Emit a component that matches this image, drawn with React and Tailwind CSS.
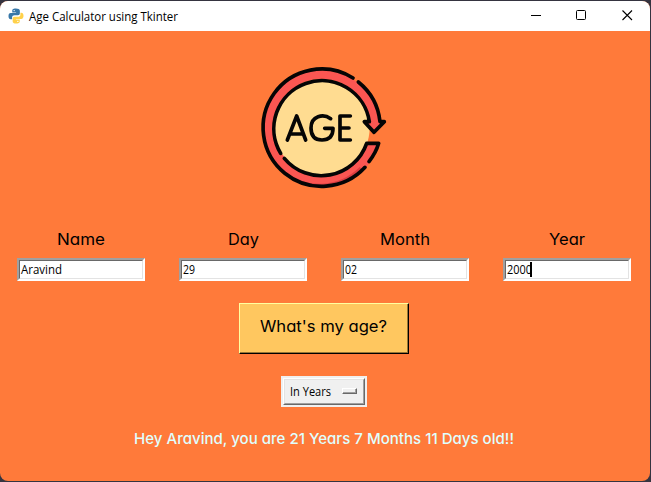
const fields = [
  { label: 'Name', value: 'Aravind' },
  { label: 'Day', value: '29' },
  { label: 'Month', value: '02' },
  { label: 'Year', value: '2000', focused: true },
];

const labelWidths = { Name: 48, Day: 31, Month: 50, Year: 36 };
const valueWidths = { Aravind: 41, 29: 12, '02': 12, 2000: 25 };

function PythonLogo() {
  return (
    <svg className="h-4 w-4" viewBox="0 0 32 32">
      <path fill="#3777a8" d="M15.8 1c-7 0-7.3 2.900-7.300 4.600V9h7.700v1.200H5.400C2.500 10.200 1 12.700 1 16.400s1.700 6.100 4.500 6.100h2.700v-3.900c0-2.800 2.300-4.200 4.600-4.200h7c2.400 0 3.900-1.800 3.900-4V5.600C23.700 2.500 20.300 1 15.800 1z" />
      <path fill="#ffd14a" d="M16.200 31c7 0 7.300-2.900 7.300-4.600V23h-7.700v-1.200h10.800c2.900 0 4.400-2.500 4.400-6.200s-1.700-6.100-4.500-6.100h-1.700v3.900c0 2.800-2.300 4.200-4.600 4.200h-7c-2.400 0-3.900 1.800-3.900 4v4.800c0 3.100 2.400 4.600 6.900 4.600z" />
      <circle cx="12.300" cy="5.200" r="1.400" fill="#fff" />
      <circle cx="19.700" cy="26.800" r="1.400" fill="#fff" />
    </svg>
  );
}

function AgeLogo() {
  return (
    <svg className="h-[145px] w-[150px]" viewBox="0 0 450 435" fill="none" strokeLinecap="round" strokeLinejoin="round">
      <circle cx="215" cy="218" r="144" fill="#ffdc91" />
      <path fill="#fb5652" d="M390 200A176 176 0 1 0 386 265H350A144 144 0 1 1 358 200H343L372 232L403 200Z" />
      <path fill="#db3e42" d="M98 346A177 177 0 0 0 338 344L329 336A170 170 0 0 1 98 346Z" />
      <g stroke="#050505" strokeWidth="11">
        <path d="M309 69A176 176 0 1 0 345 337" />
        <path d="M325 81A177 177 0 0 1 390 200H403L372 232L343 200H358A144 144 0 1 0 92 295" />
        <path d="M103 310A144 144 0 0 0 350 265H386Q378 293 357 320" />
        <path d="M112 255L140 183L167 255M121 237H158" />
        <path d="M242 191C220 175 183 182 183 219C183 249 201 255 216 255C240 255 249 241 249 220H224" />
        <path d="M301 183H270V255H301M270 219H297" />
      </g>
    </svg>
  );
}

function Fit({ children, width, className = '' }) {
  return (
    <svg className={`block h-6 overflow-visible ${className}`} width={width}>
      <text x="0" y="17" textLength={width} lengthAdjust="spacingAndGlyphs" fill="currentColor">
        {children}
      </text>
    </svg>
  );
}

function Field({ label, value, focused }) {
  return (
    <label className="flex w-32 flex-col items-center">
      <Fit width={labelWidths[label]} className="mb-[6px] font-[Inter,sans-serif] text-[16px] text-black [font-feature-settings:'cv11']">{label}</Fit>
      <span className="block h-[23px] w-full border-2 border-t-[#a0a0a0] border-r-white border-b-white border-l-[#a0a0a0]">
        <span className="flex h-full border border-t-[#696969] border-r-[#e3e3e3] border-b-[#e3e3e3] border-l-[#696969] bg-white pl-px">
          <Fit width={valueWidths[value]} className="-mt-[4px] font-['Open_Sans',sans-serif] text-[12px] text-black">{value}</Fit>
          {focused && <span className="mt-px -ml-[2px] h-[15px] w-[2px] bg-black" />}
        </span>
      </span>
    </label>
  );
}

export default function App() {
  return (
    <div className="h-[482px] w-[651px] overflow-hidden bg-[#353440] pt-px pr-px pb-px">
      <main className="flex h-[480px] w-[650px] flex-col overflow-hidden rounded-lg bg-[#ff7a3a]">
        <header className="flex h-[30px] shrink-0 items-center bg-white pl-2">
          <PythonLogo />
          <Fit width={149} className="ml-[5px] font-['Open_Sans',sans-serif] text-[12px] text-black">Age Calculator using Tkinter</Fit>
          <svg className="mr-[16px] ml-auto h-4 w-[104px]" viewBox="0 0 104 16" fill="none" stroke="#000">
            <path d="M1 7.500H11" />
            <rect x="46.500" y="2.500" width="9" height="9" rx="1" />
            <path d="M92.500 2.500L102 12M102 2.500L92.500 12" strokeWidth="1.100" />
          </svg>
        </header>
        <section className="flex flex-col pt-6">
          <div className="pl-[250px]"><AgeLogo /></div>
          <div className="mt-[28px] flex gap-[34px] pl-[17px]">
            {fields.map((f) => <Field key={f.label} {...f} />)}
          </div>
          <button className="mt-[22px] ml-[239px] h-[51px] w-[170px] border border-t-[#ffffa0] border-r-black border-b-black border-l-[#ffffa0] bg-[#ffc75f] text-black">
            <span className="flex h-full items-center justify-center border-r border-b border-[#967536] pb-[2px]">
              <Fit width={127} className="font-[Inter,sans-serif] text-[16px] [font-feature-settings:'cv11']">What's my age?</Fit>
            </span>
          </button>
          <div className="mt-[22px] ml-[281px] h-[31px] w-[86px] border-2 border-[#f0f0f0]">
            <div className="flex h-full items-center border border-t-white border-r-[#696969] border-b-[#696969] border-l-white bg-[#f0f0f0]">
              <div className="flex h-full w-full items-center border border-t-[#e3e3e3] border-r-[#a0a0a0] border-b-[#a0a0a0] border-l-[#e3e3e3] pl-[5px]">
                <Fit width={41} className="-mt-[2px] font-['Open_Sans',sans-serif] text-[12px] text-black">In Years</Fit>
                <span className="-mt-[2px] ml-[11px] block h-[6px] w-[15px] shrink-0 border border-t-white border-r-[#696969] border-b-[#696969] border-l-white">
                  <span className="block h-full border-r border-b border-[#a0a0a0]" />
                </span>
              </div>
            </div>
          </div>
          <div className="mt-5 pl-[134px]">
            <Fit width={380} className="font-[Inter,sans-serif] text-[15px] font-medium text-[#e0ffff] [font-feature-settings:'cv11']">Hey Aravind, you are 21 Years 7 Months 11 Days old!!</Fit>
          </div>
        </section>
      </main>
    </div>
  );
}
